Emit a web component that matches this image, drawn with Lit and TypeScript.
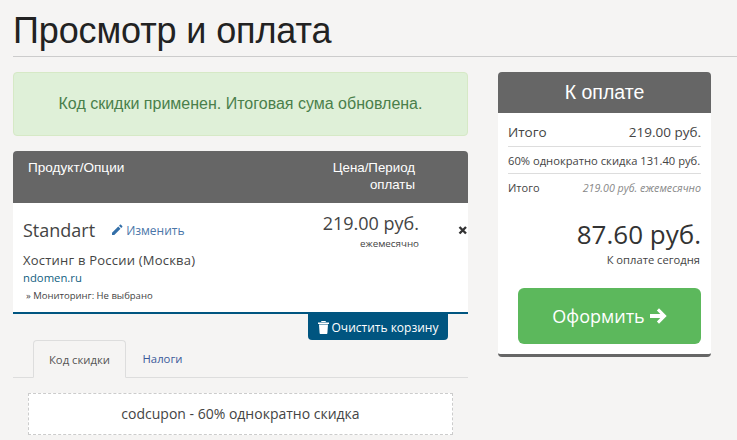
import { LitElement, html, css } from "lit";
import { customElement } from "lit/decorators.js";

@customElement("app-root")
export class AppRoot extends LitElement {
  static styles = css`
    :host { display: block; width: 737px; height: 440px; overflow: hidden; background: #f5f4f3; font-family: "Open Sans", sans-serif; color: #333; position: relative; }
    * { box-sizing: border-box; }
    .title { margin: 0 0 0 13px; height: 57px; padding-top: 11px; font: 400 36px/40px "Liberation Sans", sans-serif; letter-spacing: -.12px; color: #222; border-bottom: 1px solid #ccc; }
    .cols { display: flex; padding: 15px 0 0 13px; gap: 30px; align-items: flex-start; }
    .main { width: 455px; flex: none; }
    .side { width: 213px; flex: none; }
    .alert { height: 64px; border: 1px solid #d6e9c6; background: #dff0d8; border-radius: 4px; color: #4a7f4b; font: 16px/20px "Liberation Sans", sans-serif; display: flex; align-items: center; justify-content: center; padding-bottom: 1px; margin-bottom: 15px; }
    .thead { height: 52px; background: #666; border-radius: 4px 4px 0 0; color: #fff; font: 13.6px/17px "Liberation Sans", sans-serif; display: flex; justify-content: space-between; padding: 8px 53px 0 15px; }
    .thead .r { text-align: right; font-size: 13.3px; }
    .item { height: 111px; background: #fff; border-bottom: 2px solid #005580; position: relative; padding: 15px 0 0 10px; display: flex; justify-content: space-between; }
    .name { display: flex; align-items: center; gap: 16px; height: 24px; font-size: 18px; color: #444; }
    .edit { display: inline-flex; align-items: center; gap: 3px; font-size: 12px; color: #4a76a8; }
    .edit svg { width: 12px; height: 12px; fill: #336fa8; }
    .group { font-size: 13px; line-height: 18px; margin-top: 9px; color: #444; letter-spacing: .22px; }
    .dom { font-size: 11.3px; line-height: 16px; margin-top: 1px; color: #11607f; }
    .opt { font-size: 9.5px; line-height: 14px; margin: 3px 0 0 3px; color: #444; }
    .price { text-align: right; padding-right: 49px; margin-top: -7px; }
    .price .p { font-size: 18px; line-height: 24px; color: #444; }
    .price .s { font-size: 9.8px; line-height: 14px; color: #444; margin-top: 2px; }
    .x { position: absolute; right: 0; top: 21px; width: 10px; height: 12px; }
    .clearrow { display: flex; justify-content: flex-end; padding-right: 20px; height: 26px; }
    .clear { width: 140px; height: 26px; background: #005580; color: #fff; border-radius: 0 0 4px 4px; font-size: 12px; display: flex; align-items: center; justify-content: center; gap: 3px; }
    .clear svg { width: 11px; height: 13px; fill: #fff; }
    .tabs { display: flex; height: 38px; padding-left: 20px; border-bottom: 1px solid #ddd; font-size: 11.3px; }
    .tab { display: flex; align-items: center; justify-content: center; }
    .tab.on { width: 93px; height: 38px; border: 1px solid #ddd; border-bottom-color: #f5f4f3; border-radius: 4px 4px 0 0; color: #555; }
    .tab.off { width: 73px; color: #3b5a9a; }
    .coupon { margin: 15px 15px 0; height: 42px; border: 1px dashed #ccc; background: #fff; display: flex; align-items: center; justify-content: center; font-size: 14px; color: #444; padding-bottom: 2px; }
    .shead { height: 41px; background: #666; border-radius: 4px 4px 0 0; color: #fff; font: 19.5px/41px "Liberation Sans", sans-serif; text-align: center; }
    .sbody { background: #fff; height: 244px; border-bottom: 3px solid #666; border-radius: 0 0 4px 4px; padding: 0 10px; }
    .row { display: flex; justify-content: space-between; align-items: center; border-bottom: 1px solid #ddd; color: #444; }
    .r1 { height: 34px; font-size: 13.5px; padding-top: 5px; }
    .r2 { height: 27px; font-size: 11.2px; white-space: nowrap; }
    .r3 { height: 27px; font-size: 11px; border: 0; }
    .r3 i { font-size: 10.7px; color: #888; }
    .total { text-align: right; font-size: 26px; line-height: 36px; margin-top: 15px; color: #333; }
    .today { text-align: right; font-size: 11.2px; line-height: 14px; color: #444; margin-top: 1px; padding-right: 1px; }
    .go { margin: 21px 0 0 10px; height: 56px; background: #5cb85c; border-radius: 6px; color: #fff; font-size: 18px; display: flex; align-items: center; justify-content: center; gap: 4px; }
    .go svg { width: 18px; height: 18px; fill: #fff; }
  `;

  render() {
    return html`
      <h1 class="title">Просмотр и оплата</h1>
      <div class="cols">
        <div class="main">
          <div class="alert">Код скидки применен. Итоговая сума обновлена.</div>
          <div class="thead"><div>Продукт/Опции</div><div class="r">Цена/Период<br />оплаты</div></div>
          <div class="item">
            <div>
              <div class="name">Standart
                <span class="edit"><svg viewBox="0 0 24 24"><path d="M2 17.5V22h4.500L19 9.500 14.500 5zM16 3.500l4.500 4.500 2-2c.6-.6.6-1.400 0-2L20 1.500c-.6-.6-1.400-.6-2 0z"/></svg>Изменить</span>
              </div>
              <div class="group">Хостинг в России (Москва)</div>
              <div class="dom">ndomen.ru</div>
              <div class="opt">» Мониторинг: Не выбрано</div>
            </div>
            <div class="price"><div class="p">219.00 руб.</div><div class="s">ежемесячно</div></div>
            <svg class="x" viewBox="0 0 10 12"><path d="M1.500 3l6.500 6.500M8 3l-6.500 6.500" stroke="#333" stroke-width="2.400" fill="none"/></svg>
          </div>
          <div class="clearrow">
            <div class="clear"><svg viewBox="0 0 11 13"><path d="M0 1.500h11V3H0zM3.500 0h4l.5 1H3zM1 3.500h9l-.6 8.500c0 .6-.5 1-1 1H2.600c-.5 0-1-.4-1-1z"/></svg>Очистить корзину</div>
          </div>
          <div class="tabs"><div class="tab on">Код скидки</div><div class="tab off">Налоги</div></div>
          <div class="coupon">codcupon - 60% однократно скидка</div>
        </div>
        <div class="side">
          <div class="shead">К оплате</div>
          <div class="sbody">
            <div class="row r1"><span>Итого</span><span>219.00 руб.</span></div>
            <div class="row r2"><span>60% однократно скидка 131.40 руб.</span></div>
            <div class="row r3"><span>Итого</span><i>219.00 руб. ежемесячно</i></div>
            <div class="total">87.60 руб.</div>
            <div class="today">К оплате сегодня</div>
            <div class="go">Оформить <svg viewBox="0 0 18 18"><path d="M10 1.300L7.900 3.400 11.300 6.900H1v4.200h10.300L7.900 14.600 10 16.700 17.700 9z"/></svg></div>
          </div>
        </div>
      </div>
    `;
  }
}
